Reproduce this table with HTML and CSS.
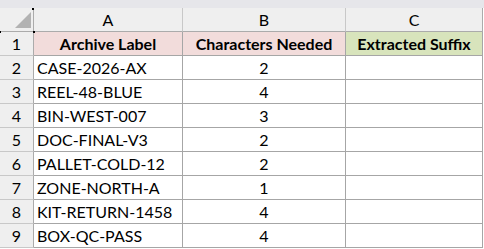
FILE: index.html
```html
<!DOCTYPE html>
<html>
<head>
<meta charset="utf-8">
<link rel="stylesheet" href="styles.css">
</head>
<body>
<div class="topstrip"></div>
<div class="sheet">
  <div class="corner"><span class="tri"></span><span class="dot d1"></span><span class="dot d2"></span><span class="dot d3"></span></div>
  <div class="colhead">A</div>
  <div class="colhead">B</div>
  <div class="colhead last">C</div>

  <div class="rowhead">1</div>
  <div class="cell hdr pink">Archive Label</div>
  <div class="cell hdr pink">Characters Needed</div>
  <div class="cell hdr green">Extracted Suffix</div>

  <div class="rowhead">2</div><div class="cell">CASE-2026-AX</div><div class="cell num">2</div><div class="cell"></div>
  <div class="rowhead">3</div><div class="cell">REEL-48-BLUE</div><div class="cell num">4</div><div class="cell"></div>
  <div class="rowhead">4</div><div class="cell">BIN-WEST-007</div><div class="cell num">3</div><div class="cell"></div>
  <div class="rowhead">5</div><div class="cell">DOC-FINAL-V3</div><div class="cell num">2</div><div class="cell"></div>
  <div class="rowhead">6</div><div class="cell">PALLET-COLD-12</div><div class="cell num">2</div><div class="cell"></div>
  <div class="rowhead">7</div><div class="cell">ZONE-NORTH-A</div><div class="cell num">1</div><div class="cell"></div>
  <div class="rowhead">8</div><div class="cell">KIT-RETURN-1458</div><div class="cell num">4</div><div class="cell"></div>
  <div class="rowhead">9</div><div class="cell">BOX-QC-PASS</div><div class="cell num">4</div><div class="cell"></div>
</div>
</body>
</html>
```

FILE: styles.css
```css
html, body {
  margin: 0;
  padding: 0;
  background: #ffffff;
}
body {
  width: 484px;
  height: 249px;
  overflow: hidden;
  font-family: "Lato", "Open Sans", sans-serif;
  font-size: 16px;
  color: #000;
}
.topstrip {
  height: 8px;
  background: #e6e6ea;
}
.sheet {
  display: grid;
  grid-template-columns: 34px 149px 163px 137px;
  grid-auto-rows: 24px;
}
.corner {
  position: relative;
  background: #efefef;
  border-right: 1px solid #ababab;
  border-bottom: 1px solid #ababab;
}
.tri {
  position: absolute;
  left: 15px;
  top: 4px;
  width: 0;
  height: 0;
  border-left: 16px solid transparent;
  border-bottom: 16px solid #b2b2b2;
}
.dot {
  position: absolute;
  width: 2px;
  height: 2px;
  background: #000;
}
.d1 { left: 32px; top: 0; }
.d2 { left: 33px; top: 23px; }
.d3 { left: 0; top: 23px; width: 1px; }
.colhead {
  background: #efefef;
  border-right: 1px solid #c8c8c8;
  border-bottom: 1px solid #ababab;
  display: flex;
  align-items: center;
  justify-content: center;
}
.colhead.last {
  border-right-color: #ababab;
}
.rowhead {
  background: #efefef;
  border-right: 1px solid #ababab;
  border-bottom: 1px solid #c8c8c8;
  display: flex;
  align-items: center;
  justify-content: center;
}
.cell {
  border-right: 1px solid #a6a6a6;
  border-bottom: 1px solid #a6a6a6;
  display: flex;
  align-items: center;
  padding-left: 3px;
  white-space: nowrap;
  overflow: hidden;
}
.hdr {
  font-weight: bold;
  justify-content: center;
  padding-left: 0;
}
.pink { background: #f2dcdb; }
.green { background: #d8e4bc; }
.num {
  justify-content: center;
  padding-left: 0;
}
```
